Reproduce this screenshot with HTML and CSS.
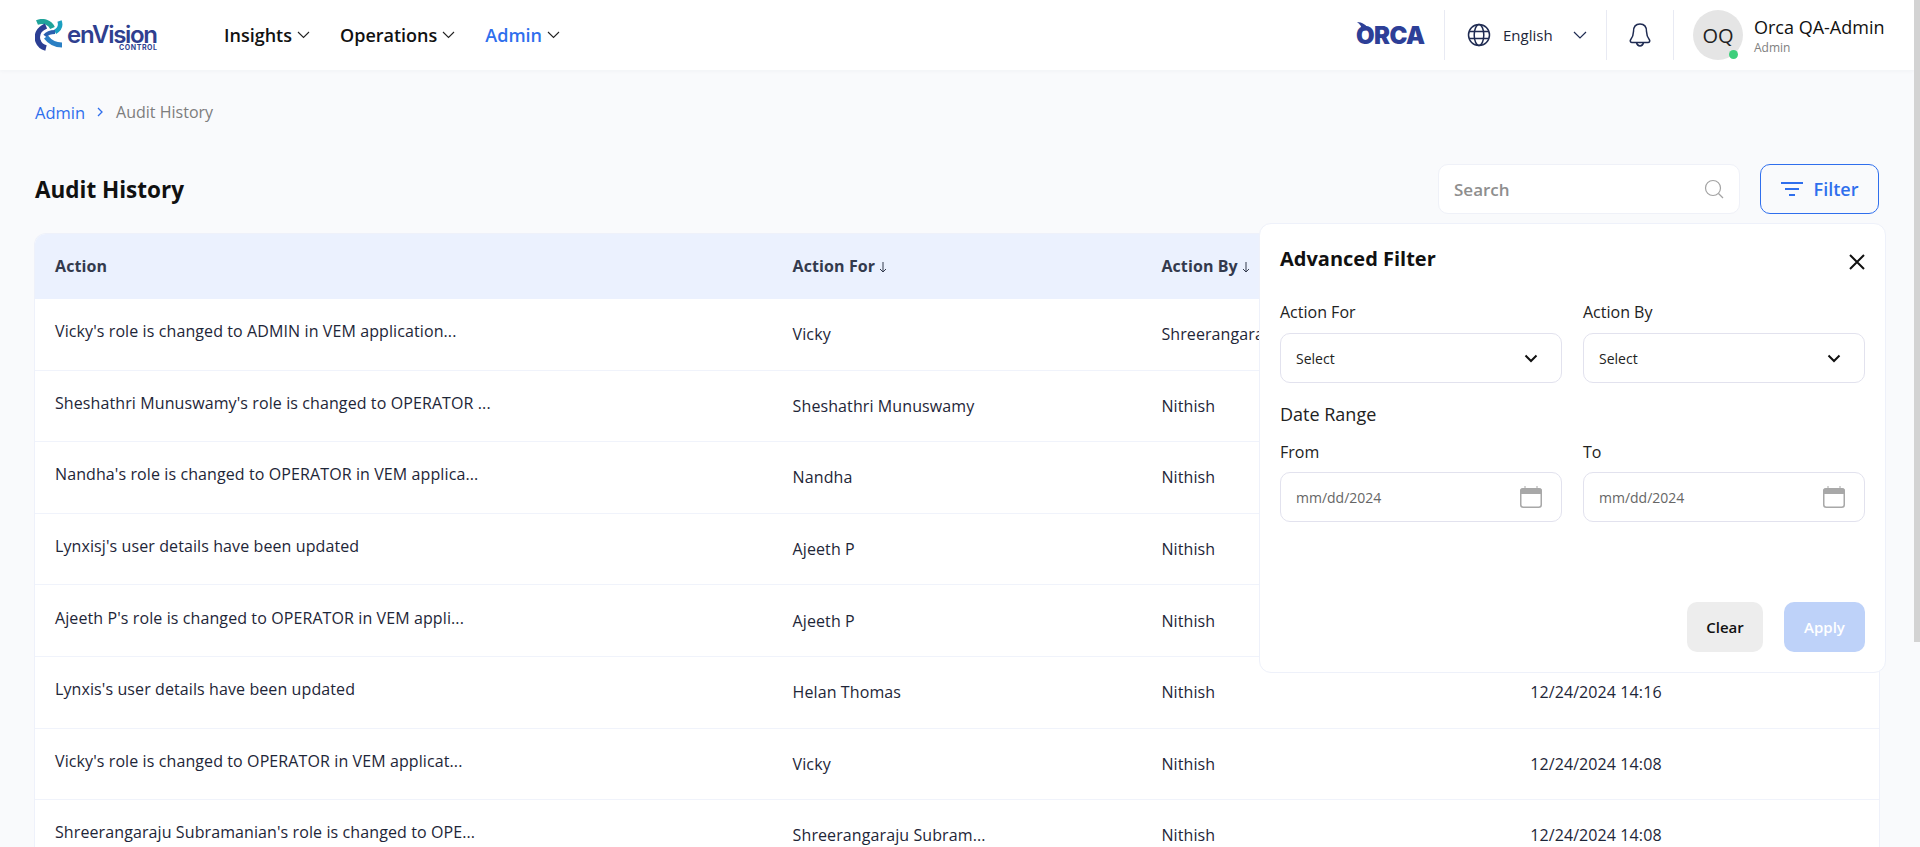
FILE: index.html
```html
<!DOCTYPE html>
<html>

<head>
    <title>Audit History</title>
    <link rel="stylesheet" href="styles.css">
</head>

<body>
    <div class="app">
        <header class="topbar">
            <div class="brand">
                <svg class="brand-mark" width="28" height="32" viewBox="0 0 28 32" fill="none">
                    <path d="M2 3.500C8 1 15 3 17.500 9" stroke="#1fa39a" stroke-width="5"/>
                    <path d="M24.500 2C26 6 25 10 20 13" stroke="#1b9fc0" stroke-width="4.500"/>
                    <path d="M11 7C4 10 1 16 3 22C4.500 26 7 28 11 29" stroke="#2b3f94" stroke-width="5.500"/>
                    <path d="M10 17C13 13 18 13 20 13" stroke="#2b5fae" stroke-width="4"/>
                    <path d="M11 18C14 22 19 26 27 26" stroke="#2a7fc4" stroke-width="5"/>
                </svg>
                <svg class="brand-text" width="96" height="40" viewBox="0 0 96 40">
                    <text class="brand-name" x="0" y="28" textLength="91">enVision</text>
                    <text class="brand-sub" x="52" y="35" textLength="38">CONTROL</text>
                </svg>
            </div>
            <nav class="nav">
                <a class="nav-item">Insights
                    <svg width="13" height="8" viewBox="0 0 13 8" fill="none"><path d="M1 1l5.500 5.500L12 1" stroke="#222" stroke-width="1.100"/></svg>
                </a>
                <a class="nav-item">Operations
                    <svg width="13" height="8" viewBox="0 0 13 8" fill="none"><path d="M1 1l5.500 5.500L12 1" stroke="#222" stroke-width="1.100"/></svg>
                </a>
                <a class="nav-item active">Admin
                    <svg width="13" height="8" viewBox="0 0 13 8" fill="none"><path d="M1 1l5.500 5.500L12 1" stroke="#222" stroke-width="1.100"/></svg>
                </a>
            </nav>
            <div class="topbar-right">
                <div class="orca">
                    <svg class="orca-fin" width="12" height="9" viewBox="0 0 12 9"><path d="M0 0C5 0 10 3 12 8L5 9C5 5 3 2 0 0Z" fill="#2d3f97"/></svg>
                    <span>ORCA</span>
                </div>
                <div class="lang">
                    <svg width="24" height="24" viewBox="0 0 24 24" fill="none" stroke="#1f2b52" stroke-width="1.500">
                        <circle cx="12" cy="12" r="10.500"/>
                        <ellipse cx="12" cy="12" rx="4.800" ry="10.500"/>
                        <path d="M2 8.500h20M2 15.500h20"/>
                    </svg>
                    <span class="lang-name">English</span>
                    <svg width="14" height="8" viewBox="0 0 14 8" fill="none"><path d="M1 1l6 6 6-6" stroke="#1f2b52" stroke-width="1.200"/></svg>
                </div>
                <div class="bell">
                    <svg width="24" height="26" viewBox="0 0 24 26" fill="none" stroke="#1f2b52" stroke-width="1.500">
                        <path d="M12 2C7.500 2 5.500 5.500 5.500 9.500C5.500 14 4 16 2.500 18C1.800 19.200 2.500 20.500 4 20.500H20C21.500 20.500 22.200 19.200 21.500 18C20 16 18.500 14 18.500 9.500C18.500 5.500 16.500 2 12 2Z"/>
                        <path d="M8.500 20.500C9 23 10.500 24 12 24C13.500 24 15 23 15.500 20.500"/>
                    </svg>
                </div>
                <div class="user">
                    <div class="avatar">OQ<span class="status-dot"></span></div>
                    <div class="user-info">
                        <div class="user-name">Orca QA-Admin</div>
                        <div class="user-role">Admin</div>
                    </div>
                </div>
            </div>
        </header>

        <main class="content">
            <div class="breadcrumb">
                <a class="crumb-link">Admin</a>
                <svg width="7" height="10" viewBox="0 0 7 10" fill="none"><path d="M1 1l4 4-4 4" stroke="#2f6fed" stroke-width="1.300"/></svg>
                <span class="crumb-current">Audit History</span>
            </div>

            <div class="toolbar">
                <h1 class="page-title">Audit History</h1>
                <div class="search">
                    <span class="search-text">Search</span>
                    <svg width="20" height="20" viewBox="0 0 20 20" fill="none" stroke="#a3a3a3" stroke-width="1.200">
                        <circle cx="9" cy="9" r="7.500"/>
                        <path d="M14.500 14.500L19 19"/>
                    </svg>
                </div>
                <button type="button" class="filter-btn">
                    <svg width="22" height="14" viewBox="0 0 22 14" fill="none" stroke="#2f6fed" stroke-width="2">
                        <path d="M0 1h22M4 7h14M8 13h6"/>
                    </svg>
                    Filter
                </button>
            </div>

            <div class="table-wrap">
                <table class="list">
                    <colgroup>
                        <col class="col-wide">
                        <col class="col-narrow">
                        <col class="col-narrow">
                        <col class="col-narrow">
                    </colgroup>
                    <thead>
                        <tr>
                            <th>Action</th>
                            <th>Action For <svg class="sort" width="8" height="11" viewBox="0 0 8 11" fill="none"><path d="M4 0v10M1 7l3 3 3-3" stroke="#333a4d"/></svg></th>
                            <th>Action By <svg class="sort" width="8" height="11" viewBox="0 0 8 11" fill="none"><path d="M4 0v10M1 7l3 3 3-3" stroke="#333a4d"/></svg></th>
                            <th></th>
                        </tr>
                    </thead>
                    <tbody>
                        <tr>
                            <td class="action-text">Vicky's role is changed to ADMIN in VEM application...</td>
                            <td>Vicky</td>
                            <td>Shreerangaraju Subramanian</td>
                            <td></td>
                        </tr>
                        <tr>
                            <td class="action-text">Sheshathri Munuswamy's role is changed to OPERATOR ...</td>
                            <td>Sheshathri Munuswamy</td>
                            <td>Nithish</td>
                            <td></td>
                        </tr>
                        <tr>
                            <td class="action-text">Nandha's role is changed to OPERATOR in VEM applica...</td>
                            <td>Nandha</td>
                            <td>Nithish</td>
                            <td></td>
                        </tr>
                        <tr>
                            <td class="action-text">Lynxisj's user details have been updated</td>
                            <td>Ajeeth P</td>
                            <td>Nithish</td>
                            <td></td>
                        </tr>
                        <tr>
                            <td class="action-text">Ajeeth P's role is changed to OPERATOR in VEM appli...</td>
                            <td>Ajeeth P</td>
                            <td>Nithish</td>
                            <td></td>
                        </tr>
                        <tr>
                            <td class="action-text">Lynxis's user details have been updated</td>
                            <td>Helan Thomas</td>
                            <td>Nithish</td>
                            <td>12/24/2024 14:16</td>
                        </tr>
                        <tr>
                            <td class="action-text">Vicky's role is changed to OPERATOR in VEM applicat...</td>
                            <td>Vicky</td>
                            <td>Nithish</td>
                            <td>12/24/2024 14:08</td>
                        </tr>
                        <tr>
                            <td class="action-text">Shreerangaraju Subramanian's role is changed to OPE...</td>
                            <td>Shreerangaraju Subram...</td>
                            <td>Nithish</td>
                            <td>12/24/2024 14:08</td>
                        </tr>
                    </tbody>
                </table>
            </div>

            <form class="filter-panel" onsubmit="event.preventDefault();">
                <div class="panel-head">
                    <h2 class="panel-title">Advanced Filter</h2>
                    <svg class="panel-close" width="16" height="16" viewBox="0 0 16 16" fill="none"><path d="M1 1l14 14M15 1L1 15" stroke="#111" stroke-width="2"/></svg>
                </div>
                <div class="field-row">
                    <div>
                        <label class="field-label">Action For</label>
                        <div class="field-box">
                            <span class="select-text">Select</span>
                            <svg width="14" height="9" viewBox="0 0 14 9" fill="none"><path d="M1.500 1.500L7 7l5.500-5.500" stroke="#111" stroke-width="2"/></svg>
                        </div>
                    </div>
                    <div>
                        <label class="field-label">Action By</label>
                        <div class="field-box">
                            <span class="select-text">Select</span>
                            <svg width="14" height="9" viewBox="0 0 14 9" fill="none"><path d="M1.500 1.500L7 7l5.500-5.500" stroke="#111" stroke-width="2"/></svg>
                        </div>
                    </div>
                </div>
                <div class="range-title">Date Range</div>
                <div class="field-row date-row">
                    <div>
                        <label class="field-label">From</label>
                        <div class="field-box">
                            <span class="date-text">mm/dd/2024</span>
                            <svg class="cal" width="22" height="22" viewBox="0 0 22 22" fill="none">
                                <path d="M0 5a3 3 0 0 1 3-3h16a3 3 0 0 1 3 3v3H0z" fill="#a8a8a8"/>
                                <path d="M5 0v3M17 0v3" stroke="#a8a8a8"/>
                                <rect x="0.750" y="3" width="20.500" height="18.250" rx="2.500" stroke="#a8a8a8" stroke-width="1.500"/>
                            </svg>
                        </div>
                    </div>
                    <div>
                        <label class="field-label">To</label>
                        <div class="field-box">
                            <span class="date-text">mm/dd/2024</span>
                            <svg class="cal" width="22" height="22" viewBox="0 0 22 22" fill="none">
                                <path d="M0 5a3 3 0 0 1 3-3h16a3 3 0 0 1 3 3v3H0z" fill="#a8a8a8"/>
                                <path d="M5 0v3M17 0v3" stroke="#a8a8a8"/>
                                <rect x="0.750" y="3" width="20.500" height="18.250" rx="2.500" stroke="#a8a8a8" stroke-width="1.500"/>
                            </svg>
                        </div>
                    </div>
                </div>
                <div class="panel-actions">
                    <button type="button" class="btn-clear">Clear</button>
                    <button type="submit" class="btn-apply">Apply</button>
                </div>
            </form>
        </main>
    </div>
    <div class="scrollbar"><div class="scrollbar-thumb"></div></div>
</body>

</html>
```

FILE: styles.css
```css
* {
    box-sizing: border-box;
}

html, body {
    height: 100%;
}

body {
    margin: 0;
    display: flex;
    overflow: hidden;
    background-color: #f9fafc;
    color: #1e2638;
    font-family: "Open Sans", "Liberation Sans", sans-serif;
}

.app {
    flex: 1;
    min-width: 0;
}

.scrollbar {
    width: 6px;
    background-color: #f9fafc;
}

.scrollbar-thumb {
    height: 642px;
    background-color: #d3d3d3;
}

/* top bar */
.topbar {
    height: 70px;
    display: flex;
    align-items: center;
    padding-left: 35px;
    background-color: #fff;
    box-shadow: 0 1px 4px rgba(30, 40, 80, 0.04);
}

.brand {
    display: flex;
    align-items: center;
    gap: 4px;
    width: 189px;
}

.brand-mark {
    flex: none;
}

.brand-name {
    font-family: "Inter", "Liberation Sans", sans-serif;
    font-size: 24px;
    font-weight: 600;
    fill: #2f3f8f;
}

.brand-sub {
    font-family: "Inter", "Liberation Sans", sans-serif;
    font-size: 7px;
    font-weight: 700;
    fill: #2f3f8f;
}

.nav {
    display: flex;
    gap: 30px;
}

.nav-item {
    display: flex;
    align-items: center;
    gap: 5px;
    font-size: 18px;
    font-weight: 600;
    color: #111;
}

.nav-item.active {
    color: #2f6fed;
}

.topbar-right {
    margin-left: auto;
    display: flex;
    align-items: center;
    height: 50px;
}

.orca {
    position: relative;
    width: 88px;
    font-family: "Inter", "Liberation Sans", sans-serif;
    font-size: 24px;
    font-weight: 900;
    letter-spacing: -0.6px;
    color: #2d3f97;
}

.orca-fin {
    position: absolute;
    left: 1px;
    top: 1px;
}

.lang {
    width: 162px;
    height: 50px;
    display: flex;
    align-items: center;
    border-left: 1px solid #e8eaf3;
    padding-left: 22px;
}

.lang-name {
    margin-left: 12px;
    margin-right: 17px;
    width: 53px;
    font-size: 15px;
}

.bell {
    width: 67px;
    height: 50px;
    display: flex;
    align-items: center;
    justify-content: center;
    border-left: 1px solid #e8eaf3;
}

.user {
    height: 50px;
    width: 241px;
    display: flex;
    gap: 11px;
    border-left: 1px solid #e8eaf3;
    padding-left: 19px;
}

.avatar {
    position: relative;
    width: 50px;
    height: 50px;
    border-radius: 50%;
    background-color: #e5e5e5;
    display: flex;
    align-items: center;
    justify-content: center;
    font-size: 20px;
    color: #222;
}

.status-dot {
    position: absolute;
    right: 5px;
    bottom: 1px;
    width: 9px;
    height: 9px;
    border-radius: 50%;
    background-color: #3ecf7c;
}

.user-name {
    font-size: 18px;
    line-height: 24px;
    margin-top: 5px;
    color: #111;
}

.user-role {
    font-size: 12px;
    line-height: 16px;
    margin-top: 1px;
    color: #808080;
}

/* page */
.content {
    position: relative;
    padding: 31px 34px 0;
}

.breadcrumb {
    display: flex;
    align-items: center;
    height: 22px;
    gap: 12px;
    padding-left: 1px;
    font-size: 16px;
}

.crumb-link {
    font-size: 16.5px;
    color: #2f6fed;
}

.crumb-current {
    color: #7d7d7d;
}

.toolbar {
    display: flex;
    align-items: center;
    margin-top: 41px;
    margin-right: 1px;
    gap: 20px;
}

.page-title {
    margin: 0 auto 0 1px;
    font-size: 22.5px;
    font-weight: 700;
    color: #111;
}

.search {
    width: 302px;
    height: 50px;
    display: flex;
    align-items: center;
    justify-content: space-between;
    padding: 0 15px;
    background-color: #fff;
    border: 1px solid #eff1f8;
    border-radius: 10px;
}

.search-text {
    font-size: 17px;
    font-weight: 600;
    color: #8e8e8e;
}

.filter-btn {
    width: 119px;
    height: 50px;
    display: flex;
    align-items: center;
    justify-content: center;
    gap: 11px;
    padding: 0;
    background-color: transparent;
    border: 1px solid #2f6fed;
    border-radius: 10px;
    color: #2f6fed;
    font-family: inherit;
    font-size: 18px;
    font-weight: 600;
}

/* table */
.table-wrap {
    margin-top: 19px;
    background-color: #fff;
    border: 1px solid #eef1fa;
    border-bottom: none;
    border-radius: 12px 12px 0 0;
    overflow: hidden;
}

table.list {
    width: 100%;
    table-layout: fixed;
    border-collapse: separate;
    border-spacing: 0;
    font-size: 16px;
    letter-spacing: 0.1px;
}

.col-wide {
    width: 40%;
}

.col-narrow {
    width: 20%;
}

th {
    height: 65px;
    padding: 0 20px 2px;
    text-align: left;
    font-size: 16px;
    font-weight: 700;
    color: #333a4d;
    background-color: #ebf1fe;
}

.sort {
    vertical-align: -1px;
}

td {
    height: 71.6px;
    padding: 0 20px;
    white-space: nowrap;
    overflow: hidden;
    border-bottom: 1px solid #f0f3fb;
}

td.action-text {
    padding-bottom: 6px;
}

/* advanced filter */
.filter-panel {
    position: absolute;
    top: 153px;
    left: 1259px;
    width: 627px;
    height: 450px;
    padding: 21px 20px 0;
    background-color: #fff;
    border: 1px solid #eef1fa;
    border-radius: 12px;
}

.panel-head {
    display: flex;
    justify-content: space-between;
    align-items: center;
    height: 26px;
}

.panel-title {
    margin: 0;
    font-size: 20px;
    font-weight: 700;
    color: #111;
}

.panel-close {
    margin-top: 8px;
}

.field-row {
    display: grid;
    grid-template-columns: 1fr 1fr;
    gap: 21px;
    margin-top: 31px;
}

.date-row {
    margin-top: 16px;
}

.field-label {
    display: block;
    font-size: 16px;
    line-height: 20px;
    color: #222;
}

.field-box {
    height: 50px;
    margin-top: 11px;
    display: flex;
    align-items: center;
    justify-content: space-between;
    padding: 0 23px 0 15px;
    border: 1px solid #e2e2ee;
    border-radius: 10px;
}

.date-row .field-box {
    margin-top: 10px;
    padding-right: 19px;
}

.select-text {
    font-size: 14px;
    color: #222;
}

.date-text {
    font-size: 14px;
    color: #666;
}

.range-title {
    margin-top: 19px;
    font-size: 18px;
    line-height: 24px;
    color: #222;
}

.panel-actions {
    display: flex;
    justify-content: flex-end;
    gap: 21px;
    margin-top: 80px;
}

.panel-actions button {
    height: 50px;
    border: none;
    border-radius: 10px;
    padding: 0;
    font-family: inherit;
    font-size: 15px;
    font-weight: 600;
}

.btn-clear {
    width: 76px;
    background-color: #ededed;
    color: #111;
}

.btn-apply {
    width: 81px;
    background-color: #bed2f9;
    color: #fff;
}
```
